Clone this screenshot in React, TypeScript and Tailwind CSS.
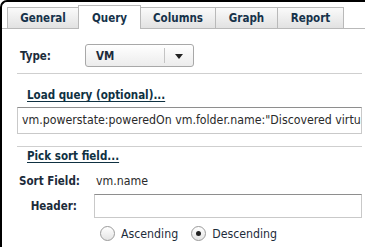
const font = { fontFamily: '"DejaVu Sans Condensed", "DejaVu Sans", Verdana, sans-serif' };

const tabs = [
  { label: "General", w: "w-[72px]" },
  { label: "Query", w: "w-[63px]" },
  { label: "Columns", w: "w-[76px]" },
  { label: "Graph", w: "w-[63px]" },
  { label: "Report", w: "w-[67px]" },
];

function Tab({ label, w, active }: { label: string; w: string; active: boolean }) {
  if (active) {
    return (
      <div className={`relative -mb-px flex h-[24px] items-end justify-center border border-b-0 border-[#b9b9b9] bg-white pb-[4px] text-[11.5px] leading-[14px] font-bold text-[#16324a] ${w}`}>
        {label}
      </div>
    );
  }
  return (
    <div className={`flex h-[21px] items-center justify-center border border-b-0 border-[#b9b9b9] bg-gradient-to-b from-[#fafafa] to-[#e2e2e2] text-[11.5px] leading-[14px] font-bold text-[#16324a] ${w}`}>
      {label}
    </div>
  );
}

function Radio({ label, checked }: { label: string; checked?: boolean }) {
  return (
    <label className="flex items-center gap-[6px]">
      <span className="flex h-[15px] w-[15px] items-center justify-center rounded-full border border-[#9a9a9a] bg-gradient-to-b from-white to-[#e4e4e4]">
        {checked && <span className="h-[5px] w-[5px] rounded-full bg-[#222]" />}
      </span>
      <span className="text-[12.25px] leading-[14px] text-[#1e2d3b]">{label}</span>
    </label>
  );
}

export default function App() {
  return (
    <div className="h-[247px] w-[365px] overflow-hidden bg-white" style={font}>
      <div className="h-full rounded-tl-[7px] border-l-2 border-t-2 border-black pt-[3px]">
        <div className="flex items-end border-b border-[#b9b9b9] pl-[5px]">
          {tabs.map((t, i) => (
            <div key={t.label} className={i > 0 ? "-ml-px" : ""}>
              <Tab label={t.label} w={t.w} active={t.label === "Query"} />
            </div>
          ))}
        </div>

        <div className="pl-[15px] pr-[3px]">
          <div className="mt-[15px] flex items-center">
            <span className="w-[68px] pl-[3px] text-[11.5px] leading-[14px] font-bold text-[#1c2b3a]">Type:</span>
            <div className="flex h-[23px] w-[109px] items-center rounded-[3px] border border-[#a8a8a8] bg-gradient-to-b from-white to-[#ececec]">
              <span className="flex-1 pl-[10px] text-[11.5px] leading-[14px] font-bold text-[#1c2b3a]">VM</span>
              <span className="h-[15px] w-px bg-[#c4c4c4]" />
              <svg width="28" height="10" viewBox="0 0 28 10">
                <path d="M10 3 L18 3 L14 8 Z" fill="#222" />
              </svg>
            </div>
          </div>

          <div className="mt-[6px] border-t border-[#cfcfcf]" />

          <div className="pt-[14px] pl-[10px] text-[11.5px] leading-[14px] font-bold text-[#0f3142] underline underline-offset-[2px]">
            Load query (optional)...
          </div>

          <div className="mt-[5px] h-[27px] overflow-hidden whitespace-nowrap border border-[#c9c9c9] border-t-[#8e8e8e] pl-[4px] pt-[5px] text-[12.25px] leading-[14px] text-[#2a2a2a]">
            vm.powerstate:poweredOn vm.folder.name:"Discovered virtual machine"
          </div>

          <div className="mt-[12px] border-t border-[#cfcfcf]" />

          <div className="pt-[2px] pl-[10px] text-[11.5px] leading-[14px] font-bold text-[#0f3142] underline underline-offset-[2px]">
            Pick sort field...
          </div>

          <div className="mt-[11px] flex items-center">
            <span className="w-[79px] pl-[2px] text-[11.5px] leading-[14px] font-bold text-[#1c2b3a]">Sort Field:</span>
            <span className="text-[12.25px] leading-[14px] text-[#2a2a2a]">vm.name</span>
          </div>

          <div className="mt-[6px] flex items-center">
            <span className="w-[60px] text-right text-[11.5px] leading-[14px] font-bold text-[#1c2b3a]">Header:</span>
            <div className="ml-[17px] h-[24px] flex-1 border border-[#c9c9c9] border-t-[#8e8e8e]" />
          </div>

          <div className="mt-[8px] flex items-center gap-[13px] pl-[83px]">
            <Radio label="Ascending" />
            <Radio label="Descending" checked />
          </div>
        </div>
      </div>
    </div>
  );
}
